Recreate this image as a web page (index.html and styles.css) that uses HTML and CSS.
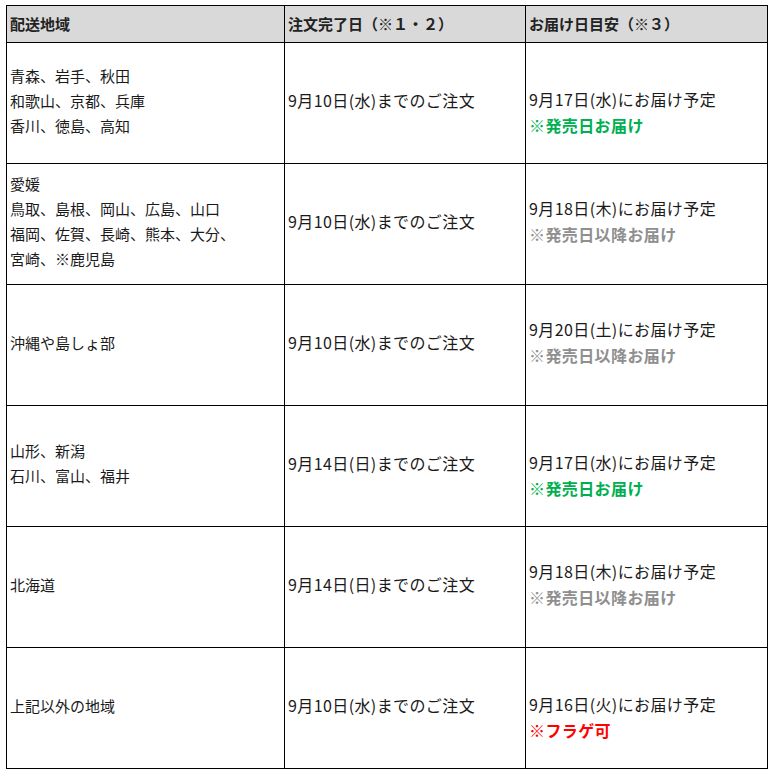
FILE: index.html
```html
<!DOCTYPE html>
<html lang="ja">
<head>
<meta charset="utf-8">
<link rel="stylesheet" href="styles.css">
</head>
<body>
<table class="ship">
  <colgroup>
    <col class="c1"><col class="c2"><col class="c3">
  </colgroup>
  <thead>
    <tr>
      <th>配送地域</th>
      <th>注文完了日（※１・２）</th>
      <th>お届け日目安（※３）</th>
    </tr>
  </thead>
  <tbody>
    <tr>
      <td class="area">青森、岩手、秋田<br>和歌山、京都、兵庫<br>香川、徳島、高知</td>
      <td class="date">9月10日(水)までのご注文</td>
      <td class="date"><span class="blank"></span>9月17日(水)にお届け予定<br><b class="ok">※発売日お届け</b></td>
    </tr>
    <tr>
      <td class="area">愛媛<br>鳥取、島根、岡山、広島、山口<br>福岡、佐賀、長崎、熊本、大分、<br>宮崎、※鹿児島</td>
      <td class="date">9月10日(水)までのご注文</td>
      <td class="date">9月18日(木)にお届け予定<br><b class="late">※発売日以降お届け</b></td>
    </tr>
    <tr>
      <td class="area">沖縄や島しょ部</td>
      <td class="date">9月10日(水)までのご注文</td>
      <td class="date">9月20日(土)にお届け予定<br><b class="late">※発売日以降お届け</b></td>
    </tr>
    <tr>
      <td class="area">山形、新潟<br>石川、富山、福井</td>
      <td class="date">9月14日(日)までのご注文</td>
      <td class="date"><span class="blank"></span>9月17日(水)にお届け予定<br><b class="ok">※発売日お届け</b></td>
    </tr>
    <tr>
      <td class="area">北海道</td>
      <td class="date">9月14日(日)までのご注文</td>
      <td class="date">9月18日(木)にお届け予定<br><b class="late">※発売日以降お届け</b></td>
    </tr>
    <tr>
      <td class="area">上記以外の地域</td>
      <td class="date">9月10日(水)までのご注文</td>
      <td class="date"><span class="blank"></span>9月16日(火)にお届け予定<br><b class="early">※フラゲ可</b></td>
    </tr>
  </tbody>
</table>
</body>
</html>
```
FILE: styles.css
```css
html, body {
  margin: 0;
  background: #fff;
}
body {
  padding: 5px 0 0 6px;
  font-family: "Noto Sans CJK JP", "Noto Sans", sans-serif;
  color: #1a1a1a;
}
.ship {
  border-collapse: collapse;
  table-layout: fixed;
  width: 761px;
}
.c1 { width: 278px; }
.c2 { width: 241px; }
.c3 { width: 242px; }
.ship th, .ship td {
  border: 1px solid #000;
  padding: 0 0 0 3px;
  text-align: left;
  vertical-align: middle;
}
.ship td {
  padding-bottom: 6px;
}
.ship thead tr { height: 37px; }
.ship tbody tr { height: 121px; }
.ship th {
  background: #d9d9d9;
  font-size: 15px;
  font-weight: 700;
  line-height: 20px;
  color: #222;
}
.area {
  font-size: 15px;
  line-height: 25px;
}
.date {
  font-size: 16px;
  line-height: 26px;
  letter-spacing: 0.4px;
}
.blank {
  display: block;
  height: 24px;
}
.ok { color: #00b050; font-weight: 700; }
.late { color: #8f8f8f; font-weight: 700; }
.early { color: #ff0000; font-weight: 700; }
```
